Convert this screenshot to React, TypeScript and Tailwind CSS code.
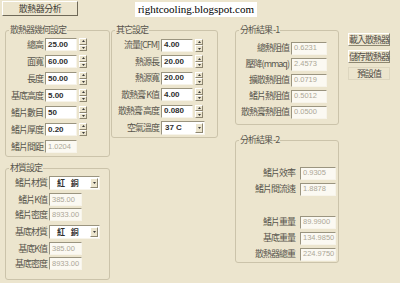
import type { ReactNode } from 'react'

const cjk = "font-['Noto_Sans_CJK_TC','Noto_Sans_CJK_SC',sans-serif]"
const num = "font-['Liberation_Sans',sans-serif]"

const sunken =
  'border border-t-[#9a947f] border-l-[#9a947f] border-b-[#f7f4ea] border-r-[#f7f4ea]'
const raised =
  'border border-t-white border-l-white border-b-[#8d8670] border-r-[#8d8670]'

function Group({
  title,
  className,
  children,
}: {
  title: string
  className: string
  children: ReactNode
}) {
  return (
    <div className={`relative rounded-[3px] border border-[#cbc3aa] ${className}`}>
      <span
        className={`absolute -top-[7px] left-[3px] bg-[#ece5ce] px-[1px] text-[9px] leading-[12px] tracking-[-1px] text-[#58554d] ${cjk}`}
      >
        {title}
      </span>
      {children}
    </div>
  )
}

function Label({ w, children }: { w: string; children: ReactNode }) {
  return (
    <span
      className={`${w} shrink-0 whitespace-nowrap text-right text-[9px] leading-[12px] tracking-[-1px] text-[#58554d] ${cjk}`}
    >
      {children}
    </span>
  )
}

function Field({
  value,
  w,
  off,
  ml = 'ml-[2px]',
}: {
  value: string
  w: string
  off?: boolean
  ml?: string
}) {
  return (
    <div
      className={`${ml} ${w} flex h-[13px] shrink-0 items-center overflow-hidden pl-[2px] ${num} ${sunken} ${
        off
          ? 'bg-[#fbf9f2] text-[7.5px] text-[#aca797]'
          : 'bg-white text-[8px] font-bold text-[#2e2e2e]'
      }`}
    >
      {value}
    </div>
  )
}

function Arrow({ up }: { up?: boolean }) {
  return (
    <div className={`flex h-[6.5px] items-center justify-center bg-[#ece5ce] ${raised}`}>
      <svg width="3" height="2" viewBox="0 0 3 2">
        <path d={up ? 'M1.5 0L3 2H0z' : 'M0 0H3L1.5 2z'} fill="#3a3a3a" />
      </svg>
    </div>
  )
}

function Spin() {
  return (
    <div className="ml-[2px] flex h-[13px] w-[8px] shrink-0 flex-col">
      <Arrow up />
      <Arrow />
    </div>
  )
}

function Select({ value, w, bold }: { value: string; w: string; bold?: boolean }) {
  return (
    <div
      className={`ml-[2px] ${w} flex h-[14px] shrink-0 items-center justify-between bg-white pl-[3px] pr-[1px] ${sunken}`}
    >
      <span
        className={`text-[8px] text-[#2e2e2e] ${bold ? `font-bold ${cjk} pl-[4px] tracking-[2px]` : `font-bold ${num}`}`}
      >
        {value}
      </span>
      <div className={`flex h-[10px] w-[8px] items-center justify-center bg-[#ece5ce] ${raised}`}>
        <svg width="3" height="2" viewBox="0 0 3 2">
          <path d="M0 0H3L1.5 2z" fill="#3a3a3a" />
        </svg>
      </div>
    </div>
  )
}

function Btn({ children, flat }: { children: ReactNode; flat?: boolean }) {
  return (
    <div
      className={`flex h-[13px] w-[42px] items-center justify-center bg-[#ece5ce] text-[9px] tracking-[-1px] text-[#4e4b44] ${cjk} ${
        flat ? 'border border-[#ddd6bf]' : raised
      }`}
    >
      {children}
    </div>
  )
}

const geo = [
  ['總高', '25.00'],
  ['面寬', '60.00'],
  ['長度', '50.00'],
  ['基底高度', '5.00'],
  ['鰭片數目', '50'],
  ['鰭片厚度', '0.20'],
]

const other = [
  ['流量[CFM]', '4.00'],
  ['熱源長', '20.00'],
  ['熱源寬', '20.00'],
  ['散熱膏 K值', '4.00'],
  ['散熱膏 高度', '0.080'],
]

const res1 = [
  ['總熱阻值', '0.6231'],
  ['壓降(mmaq)', '2.4573'],
  ['擴散熱阻值', '0.0719'],
  ['鰭片熱阻值', '0.5012'],
  ['散熱膏熱阻值', '0.0500'],
]

const res2 = [
  ['鰭片重量', '89.9900'],
  ['基底重量', '134.9850'],
  ['散熱器總重', '224.9750'],
]

export default function App() {
  return (
    <div className="h-[283px] w-[400px] overflow-hidden bg-[#ece5ce]">
      {/* top bar */}
      <div className="flex items-start pl-[2px] pt-[1px]">
        <div
          className={`flex h-[15px] w-[76px] items-center justify-center bg-[#ece5ce] text-[9px] tracking-[-0.5px] text-[#3e3b35] ${cjk} border border-t-white border-l-white border-b-[#6f6958] border-r-[#6f6958]`}
        >
          散熱器分析
        </div>
        <div className="ml-[57px] mt-[1px] flex h-[15px] w-[122px] items-center justify-center bg-white font-['Liberation_Serif',serif] text-[11px] text-black">
          rightcooling.blogspot.com
        </div>
      </div>

      <div className="mt-[13px] flex items-start">
        {/* column 1 */}
        <div className="ml-[5px] flex w-[105px] flex-col">
          <Group title="散熱器幾何設定" className="h-[127px] pt-[5px]">
            {geo.map(([l, v]) => (
              <div key={l} className="flex h-[17px] items-center">
                <Label w="w-[37px]">{l}</Label>
                <Field value={v} w="w-[32px]" />
                <Spin />
              </div>
            ))}
            <div className="flex h-[17px] items-center">
              <Label w="w-[37px]">鰭片間距</Label>
              <Field value="1.0204" w="w-[32px]" off />
            </div>
          </Group>

          <Group title="材質設定" className="mt-[11px] h-[112px] pt-[5px]">
            <div className="flex h-[18px] items-center">
              <Label w="w-[41px]">鰭片材質</Label>
              <Select value="紅 銅" w="w-[51px]" bold />
            </div>
            <div className="flex h-[15px] items-center">
              <Label w="w-[41px]">鰭片K值</Label>
              <Field value="385.00" w="w-[33px]" off />
            </div>
            <div className="flex h-[15px] items-center">
              <Label w="w-[41px]">鰭片密度</Label>
              <Field value="8933.00" w="w-[33px]" off />
            </div>
            <div className="flex h-[19px] items-center">
              <Label w="w-[41px]">基底材質</Label>
              <Select value="紅 銅" w="w-[51px]" bold />
            </div>
            <div className="flex h-[15px] items-center">
              <Label w="w-[41px]">基底K值</Label>
              <Field value="385.00" w="w-[33px]" off />
            </div>
            <div className="flex h-[15px] items-center">
              <Label w="w-[41px]">基底密度</Label>
              <Field value="8933.00" w="w-[33px]" off />
            </div>
          </Group>
        </div>

        {/* column 2 */}
        <Group title="其它設定" className="ml-[1px] h-[108px] w-[107px] pt-[6px]">
          {other.map(([l, v]) => (
            <div key={l} className="flex h-[16.5px] items-center">
              <Label w="w-[47px]">{l}</Label>
              <Field value={v} w="w-[32px]" />
              <Spin />
            </div>
          ))}
          <div className="flex h-[16.5px] items-center">
            <Label w="w-[47px]">空氣溫度</Label>
            <Select value="37 C" w="w-[44px]" />
          </div>
        </Group>

        {/* column 3 */}
        <div className="ml-[17px] flex w-[104px] flex-col">
          <Group title="分析結果 -1" className="h-[95px] pt-[9px]">
            {res1.map(([l, v]) => (
              <div key={l} className="flex h-[16px] items-center">
                <Label w="w-[53px]">{l}</Label>
                <Field value={v} w="w-[36px]" off />
              </div>
            ))}
          </Group>

          <Group title="分析結果 -2" className="mt-[15px] h-[123px] pt-[24px]">
            <div className="flex h-[16px] items-center">
              <Label w="w-[59px]">鰭片效率</Label>
              <Field value="0.9305" w="w-[36px]" ml="ml-[5px]" off />
            </div>
            <div className="flex h-[16px] items-center">
              <Label w="w-[59px]">鰭片間流速</Label>
              <Field value="1.8878" w="w-[36px]" ml="ml-[5px]" off />
            </div>
            <div className="mt-[17px] flex flex-col">
              {res2.map(([l, v]) => (
                <div key={l} className="flex h-[16px] items-center">
                  <Label w="w-[59px]">{l}</Label>
                  <Field value={v} w="w-[36px]" ml="ml-[5px]" off />
                </div>
              ))}
            </div>
          </Group>
        </div>

        {/* column 4 */}
        <div className="ml-[9px] mt-[3px] flex flex-col gap-[4px]">
          <Btn>載入散熱器</Btn>
          <Btn>儲存散熱器</Btn>
          <Btn flat>預設值</Btn>
        </div>
      </div>
    </div>
  )
}
